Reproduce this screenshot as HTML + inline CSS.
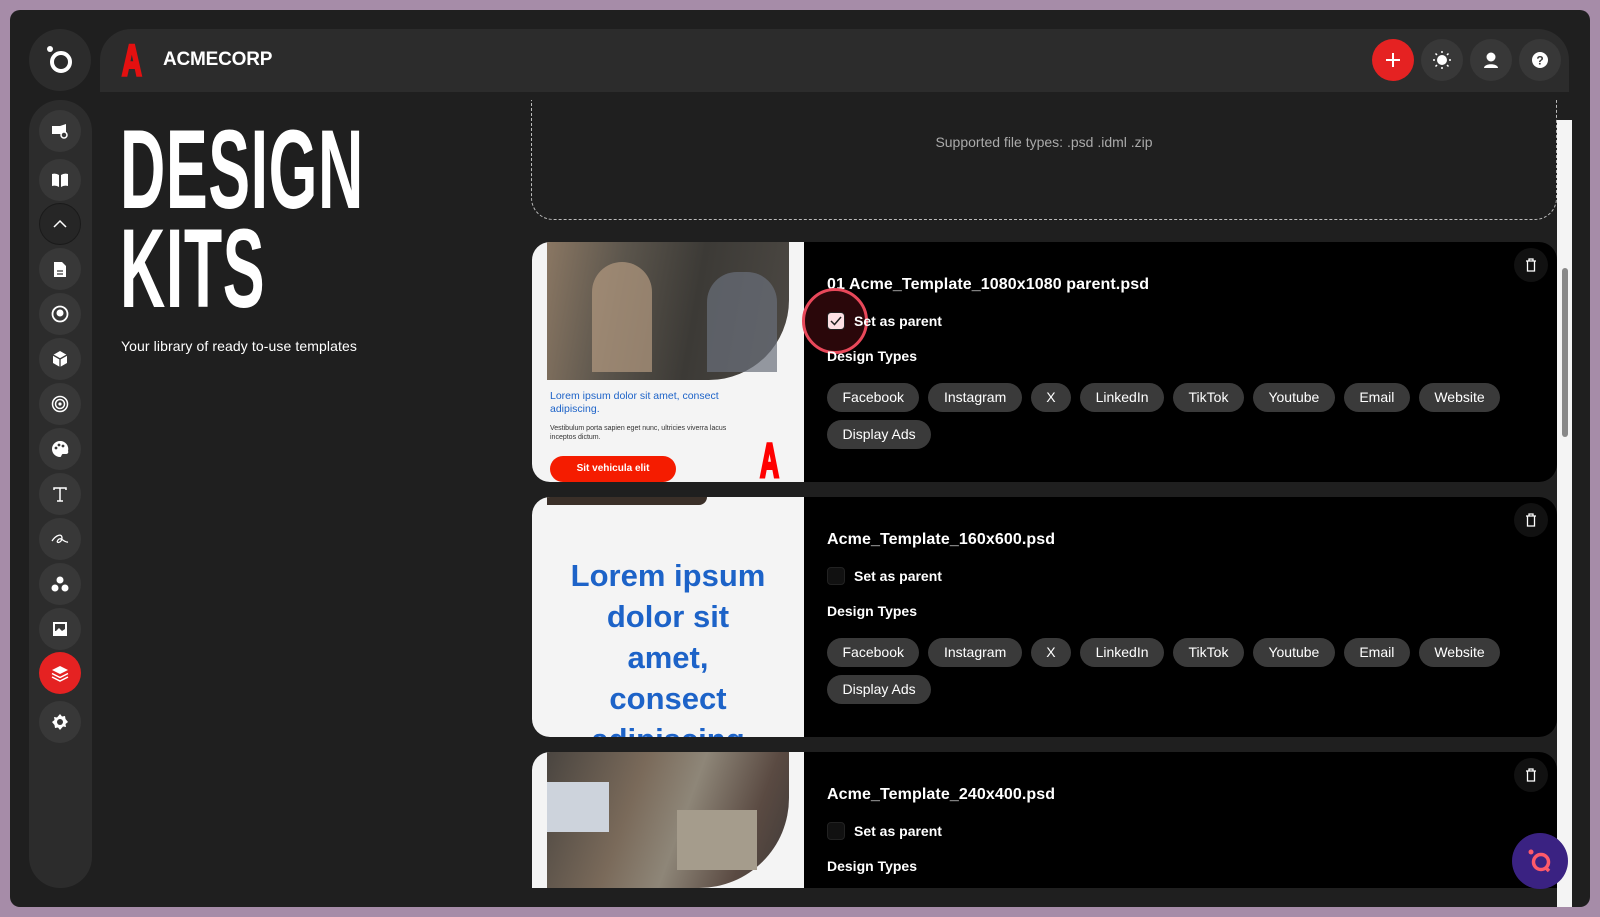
<!DOCTYPE html>
<html><head><meta charset="utf-8"><style>
*{box-sizing:border-box;margin:0;padding:0}
html,body{width:1600px;height:917px;overflow:hidden}
body{background:#a68ca8;font-family:"Liberation Sans",sans-serif;position:relative;color:#fff}
.win{position:absolute;left:10px;top:10px;width:1580px;height:897px;background:#1f1f1f;border-radius:10px;overflow:hidden}
.abs{position:absolute}
.logo{width:62px;height:62px;border-radius:31px;background:#2c2c2c}
.hdr{width:1469px;height:63px;background:#2c2c2c;border-radius:31px 31px 0 0}
.side{width:63px;height:788px;background:#2c2c2c;border-radius:31px}
.ic{position:absolute;left:39px;width:42px;height:42px;border-radius:21px;background:#383838;display:flex;align-items:center;justify-content:center}
.hb{position:absolute;top:10px;width:42px;height:42px;border-radius:21px;background:#383838;display:flex;align-items:center;justify-content:center}
.title{font-weight:bold;font-size:112px;line-height:99px;transform:scaleX(.56);transform-origin:0 0;letter-spacing:1px}
.card{position:absolute;left:532px;width:1025px;height:240px;background:#000;border-radius:18px;overflow:hidden}
.thumb{position:absolute;left:0;top:0;width:272px;height:240px;background:#f4f4f4;overflow:hidden}
.fn{position:absolute;left:295px;font-size:16px;font-weight:bold;letter-spacing:.1px}
.sp{position:absolute;left:295px;font-size:14px;font-weight:bold;display:flex;align-items:center}
.cb{width:18px;height:18px;border-radius:4px;background:#111;border:1px solid #222;margin-right:9px}
.tags{position:absolute;left:295px;width:700px;display:flex;flex-wrap:wrap;gap:8px 9px}
.tag{height:29px;line-height:29px;padding:0 15.5px;border-radius:15px;background:#3a3a3a;font-size:14px}
.tr{position:absolute;left:982px;top:6px;width:34px;height:34px;border-radius:17px;background:#111;display:flex;align-items:center;justify-content:center}
</style></head><body>
<div class="win">
<div class="abs logo" style="left:19px;top:19px;display:flex;align-items:center;justify-content:center">
<svg width="30" height="30" viewBox="0 0 30 30"><circle cx="16" cy="17" r="9" fill="none" stroke="#fff" stroke-width="4"/><circle cx="5" cy="4" r="3" fill="#fff"/></svg></div>
<div class="abs hdr" style="left:90px;top:19px">
<div class="abs" style="left:22px;top:10px;color:#e41010;font-weight:bold;font-size:44px;line-height:44px;transform:scaleX(.62);transform-origin:0 0;-webkit-text-stroke:3px #e41010">A</div>
<div class="abs" style="left:63px;top:20px;font-size:19px;font-weight:bold;letter-spacing:-.2px">ACMECORP</div>
<div class="hb" style="left:1272px;background:#e52222"><svg width="18" height="18"><path d="M9 2v14M2 9h14" stroke="#fff" stroke-width="2"/></svg></div>
<div class="hb" style="left:1321px"><svg width="20" height="20"><circle cx="10" cy="10" r="5" fill="#fff"/><path d="M10 1v2M10 17v2M1 10h2M17 10h2M3.5 3.5l1.5 1.5M15 15l1.5 1.5M3.5 16.5l1.5-1.5M15 5l1.5-1.5" stroke="#fff" stroke-width="1.5"/></svg></div>
<div class="hb" style="left:1370px"><svg width="18" height="18"><circle cx="9" cy="6" r="4.5" fill="#fff"/><path d="M2 17c0-5 14-5 14 0z" fill="#fff"/></svg></div>
<div class="hb" style="left:1419px"><svg width="18" height="18"><circle cx="9" cy="9" r="8" fill="#fff"/><text x="9" y="13.5" font-size="12" font-weight="bold" text-anchor="middle" fill="#383838" font-family="Liberation Sans">?</text></svg></div>
</div>
<div class="abs side" style="left:19px;top:90px"></div>
<div style="position:absolute;left:-10px;top:-10px">
<div class="ic" style="top:110px"><svg width="18" height="16"><path d="M1 3h8l6-2v12l-6-2H1z" fill="#fff"/><circle cx="13" cy="12" r="3" fill="#383838" stroke="#fff" stroke-width="1.5"/></svg></div>
<div class="ic" style="top:159px"><svg width="18" height="16"><path d="M1 2q4-1 7 1v12q-3-2-7-1zM17 2q-4-1-7 1v12q3-2 7-1z" fill="#fff"/></svg></div>
<div class="ic" style="top:203px;background:#262626;border:1px solid #1a1a1a"><svg width="16" height="10"><path d="M2 8l6-6 6 6" stroke="#fff" stroke-width="1.5" fill="none"/></svg></div>
<div class="ic" style="top:248px"><svg width="14" height="17"><path d="M1 1h8l4 4v11H1z" fill="#fff"/><path d="M4 10h6M4 13h6" stroke="#383838" stroke-width="1.3"/></svg></div>
<div class="ic" style="top:293px"><svg width="18" height="18"><circle cx="9" cy="9" r="7.5" fill="none" stroke="#fff" stroke-width="1.8"/><circle cx="9" cy="8" r="3.5" fill="#fff"/></svg></div>
<div class="ic" style="top:338px"><svg width="16" height="18"><path d="M8 1l7 4v8l-7 4-7-4V5z" fill="#fff"/><path d="M1 5l7 4 7-4M8 9v8" stroke="#383838" stroke-width="1.3" fill="none"/></svg></div>
<div class="ic" style="top:383px"><svg width="18" height="18"><circle cx="9" cy="9" r="7.5" fill="none" stroke="#fff" stroke-width="1.5"/><circle cx="9" cy="9" r="4.5" fill="none" stroke="#fff" stroke-width="1.5"/><circle cx="9" cy="9" r="1.6" fill="#fff"/></svg></div>
<div class="ic" style="top:428px"><svg width="18" height="18"><path d="M9 1a8 8 0 1 0 0 16c2 0 1-3 3-3h3a2 2 0 0 0 2-3A8 8 0 0 0 9 1z" fill="#fff"/><circle cx="5" cy="8" r="1.4" fill="#383838"/><circle cx="8" cy="5" r="1.4" fill="#383838"/><circle cx="12" cy="6" r="1.4" fill="#383838"/></svg></div>
<div class="ic" style="top:473px"><svg width="16" height="16"><path d="M2 4V2h12v2M8 2v13M5 15h6" stroke="#fff" stroke-width="1.5" fill="none"/></svg></div>
<div class="ic" style="top:518px"><svg width="20" height="16"><path d="M2 10c4-6 10-8 10-3s-7 6-4 2 6 3 10 2" stroke="#fff" stroke-width="1.3" fill="none"/></svg></div>
<div class="ic" style="top:563px"><svg width="18" height="16"><circle cx="9" cy="4" r="3.5" fill="#fff"/><circle cx="4" cy="12" r="3.5" fill="#fff"/><circle cx="14" cy="12" r="3.5" fill="#fff"/></svg></div>
<div class="ic" style="top:608px"><svg width="16" height="16"><rect x="1" y="1" width="14" height="14" fill="#fff"/><rect x="3" y="3" width="10" height="7" fill="#383838"/><path d="M3 11l4-4 3 3 3-2v5H3z" fill="#fff"/></svg></div>
<div class="ic" style="top:652px;background:#e52222"><svg width="18" height="18"><path d="M9 2l8 4-8 4-8-4z" fill="#fff"/><path d="M1 9.5l8 4 8-4M1 13l8 4 8-4" stroke="#fff" stroke-width="1.5" fill="none"/></svg></div>
<div class="ic" style="top:701px"><svg width="18" height="18"><path d="M9 1l2 2.5 3-.5.5 3L17 9l-2.5 2 .5 3-3-.5L9 17l-2-2.5-3 .5-.5-3L1 9l2.5-2-.5-3 3 .5z" fill="#fff"/><circle cx="9" cy="9" r="3" fill="#383838"/></svg></div>
</div>
<div class="abs title" style="left:110px;top:110px">DESIGN<br>KITS</div>
<div class="abs" style="left:111px;top:328px;font-size:14px;letter-spacing:.1px">Your library of ready to-use templates</div>
<div class="abs" style="left:521px;top:90px;width:1026px;height:120px;border:1px dashed #bbb;border-top:none;border-radius:0 0 22px 22px"></div>
<div class="abs" style="left:521px;top:124px;width:1026px;text-align:center;font-size:14px;color:#aaa">Supported file types: .psd .idml .zip</div>
<div class="abs" style="left:1547px;top:110px;width:15px;height:787px;background:#f4f4f4"><div style="position:absolute;left:5px;top:148px;width:6px;height:169px;border-radius:3px;background:#888"></div></div>
<div style="position:absolute;left:-10px;top:-10px">
<div class="card" style="top:242px">
<div class="thumb"><div style="position:absolute;left:15px;top:0;width:242px;height:138px;border-radius:0 0 80px 0;background:linear-gradient(100deg,#8a7763 0%,#5b554c 30%,#3c3a36 60%,#4c4843 100%)"></div>
<div style="position:absolute;left:60px;top:20px;width:60px;height:110px;border-radius:30px 30px 0 0;background:#b49a80;opacity:.7"></div>
<div style="position:absolute;left:175px;top:30px;width:70px;height:100px;border-radius:30px 30px 0 0;background:#6a6f7a;opacity:.7"></div>
<div style="position:absolute;left:18px;top:148px;width:200px;font-size:10.5px;color:#1d63c8;line-height:13px">Lorem ipsum dolor sit amet, consect adipiscing.</div>
<div style="position:absolute;left:18px;top:182px;width:200px;font-size:7px;color:#333;line-height:9px">Vestibulum porta sapien eget nunc, ultricies viverra lacus inceptos dictum.</div>
<div style="position:absolute;left:18px;top:214px;width:126px;height:26px;border-radius:13px;background:#f51c00;font-size:10px;font-weight:bold;text-align:center;line-height:26px">Sit vehicula elit</div>
<div style="position:absolute;left:228px;top:192px;color:#f00;font-weight:bold;font-size:48px;transform:scaleX(.55);transform-origin:0 0;-webkit-text-stroke:3px #f00">A</div>
</div>
<div class="fn" style="top:34px">01 Acme_Template_1080x1080 parent.psd</div>
<div class="abs" style="left:270px;top:46px;width:66px;height:66px;border-radius:33px;border:3px solid #e8485a;background:rgba(120,20,30,.35)"></div>
<div class="sp" style="top:70px"><div class="cb" style="background:#fde0e4;display:flex;align-items:center;justify-content:center"><svg width="12" height="10"><path d="M1 5l3.5 3.5L11 1" stroke="#222" stroke-width="1.5" fill="none"/></svg></div>Set as parent</div>
<div class="sp" style="top:106px">Design Types</div>
<div class="tags" style="top:141px"><div class="tag">Facebook</div><div class="tag">Instagram</div><div class="tag">X</div><div class="tag">LinkedIn</div><div class="tag">TikTok</div><div class="tag">Youtube</div><div class="tag">Email</div><div class="tag">Website</div><div class="tag">Display Ads</div></div>
<div class="tr"><svg width="12" height="14"><path d="M1 3h10M4 3V1h4v2M2.5 3v10h7V3" stroke="#fff" stroke-width="1.3" fill="none"/></svg></div>
</div>
<div class="card" style="top:497px">
<div class="thumb"><div style="position:absolute;left:15px;top:0;width:160px;height:8px;border-radius:0 0 60px 0;background:#3a2f28"></div>
<div style="position:absolute;left:0;top:58px;width:272px;text-align:center;font-size:31px;font-weight:bold;color:#1d63c8;line-height:41px">Lorem ipsum<br>dolor sit<br>amet,<br>consect<br>adipiscing</div></div>
<div class="fn" style="top:34px">Acme_Template_160x600.psd</div>
<div class="sp" style="top:70px"><div class="cb"></div>Set as parent</div>
<div class="sp" style="top:106px">Design Types</div>
<div class="tags" style="top:141px"><div class="tag">Facebook</div><div class="tag">Instagram</div><div class="tag">X</div><div class="tag">LinkedIn</div><div class="tag">TikTok</div><div class="tag">Youtube</div><div class="tag">Email</div><div class="tag">Website</div><div class="tag">Display Ads</div></div>
<div class="tr"><svg width="12" height="14"><path d="M1 3h10M4 3V1h4v2M2.5 3v10h7V3" stroke="#fff" stroke-width="1.3" fill="none"/></svg></div>
</div>
<div class="card" style="top:752px;height:136px;border-radius:18px 18px 0 0">
<div class="thumb" style="height:136px"><div style="position:absolute;left:15px;top:0;width:242px;height:136px;border-radius:0 0 90px 0;background:linear-gradient(110deg,#4a4540 0%,#7a6a5a 35%,#8e8678 55%,#5a4a42 80%,#3e3a38 100%)"></div>
<div style="position:absolute;left:15px;top:30px;width:62px;height:50px;background:#cdd3dc"></div>
<div style="position:absolute;left:145px;top:58px;width:80px;height:60px;background:#a59c8c"></div></div>
<div class="fn" style="top:34px">Acme_Template_240x400.psd</div>
<div class="sp" style="top:70px"><div class="cb"></div>Set as parent</div>
<div class="sp" style="top:106px">Design Types</div>
<div class="tr"><svg width="12" height="14"><path d="M1 3h10M4 3V1h4v2M2.5 3v10h7V3" stroke="#fff" stroke-width="1.3" fill="none"/></svg></div>
</div>
</div>
<div class="abs" style="left:1502px;top:823px;width:56px;height:56px;border-radius:28px;background:#3a2282;display:flex;align-items:center;justify-content:center"><svg width="30" height="30"><circle cx="16" cy="16" r="7.5" fill="none" stroke="#ff5a6a" stroke-width="3.5"/><path d="M20 21l4 4" stroke="#ff5a6a" stroke-width="3.5"/><circle cx="6" cy="6" r="2.5" fill="#ff5a6a"/></svg></div>
</div>
</body></html>
